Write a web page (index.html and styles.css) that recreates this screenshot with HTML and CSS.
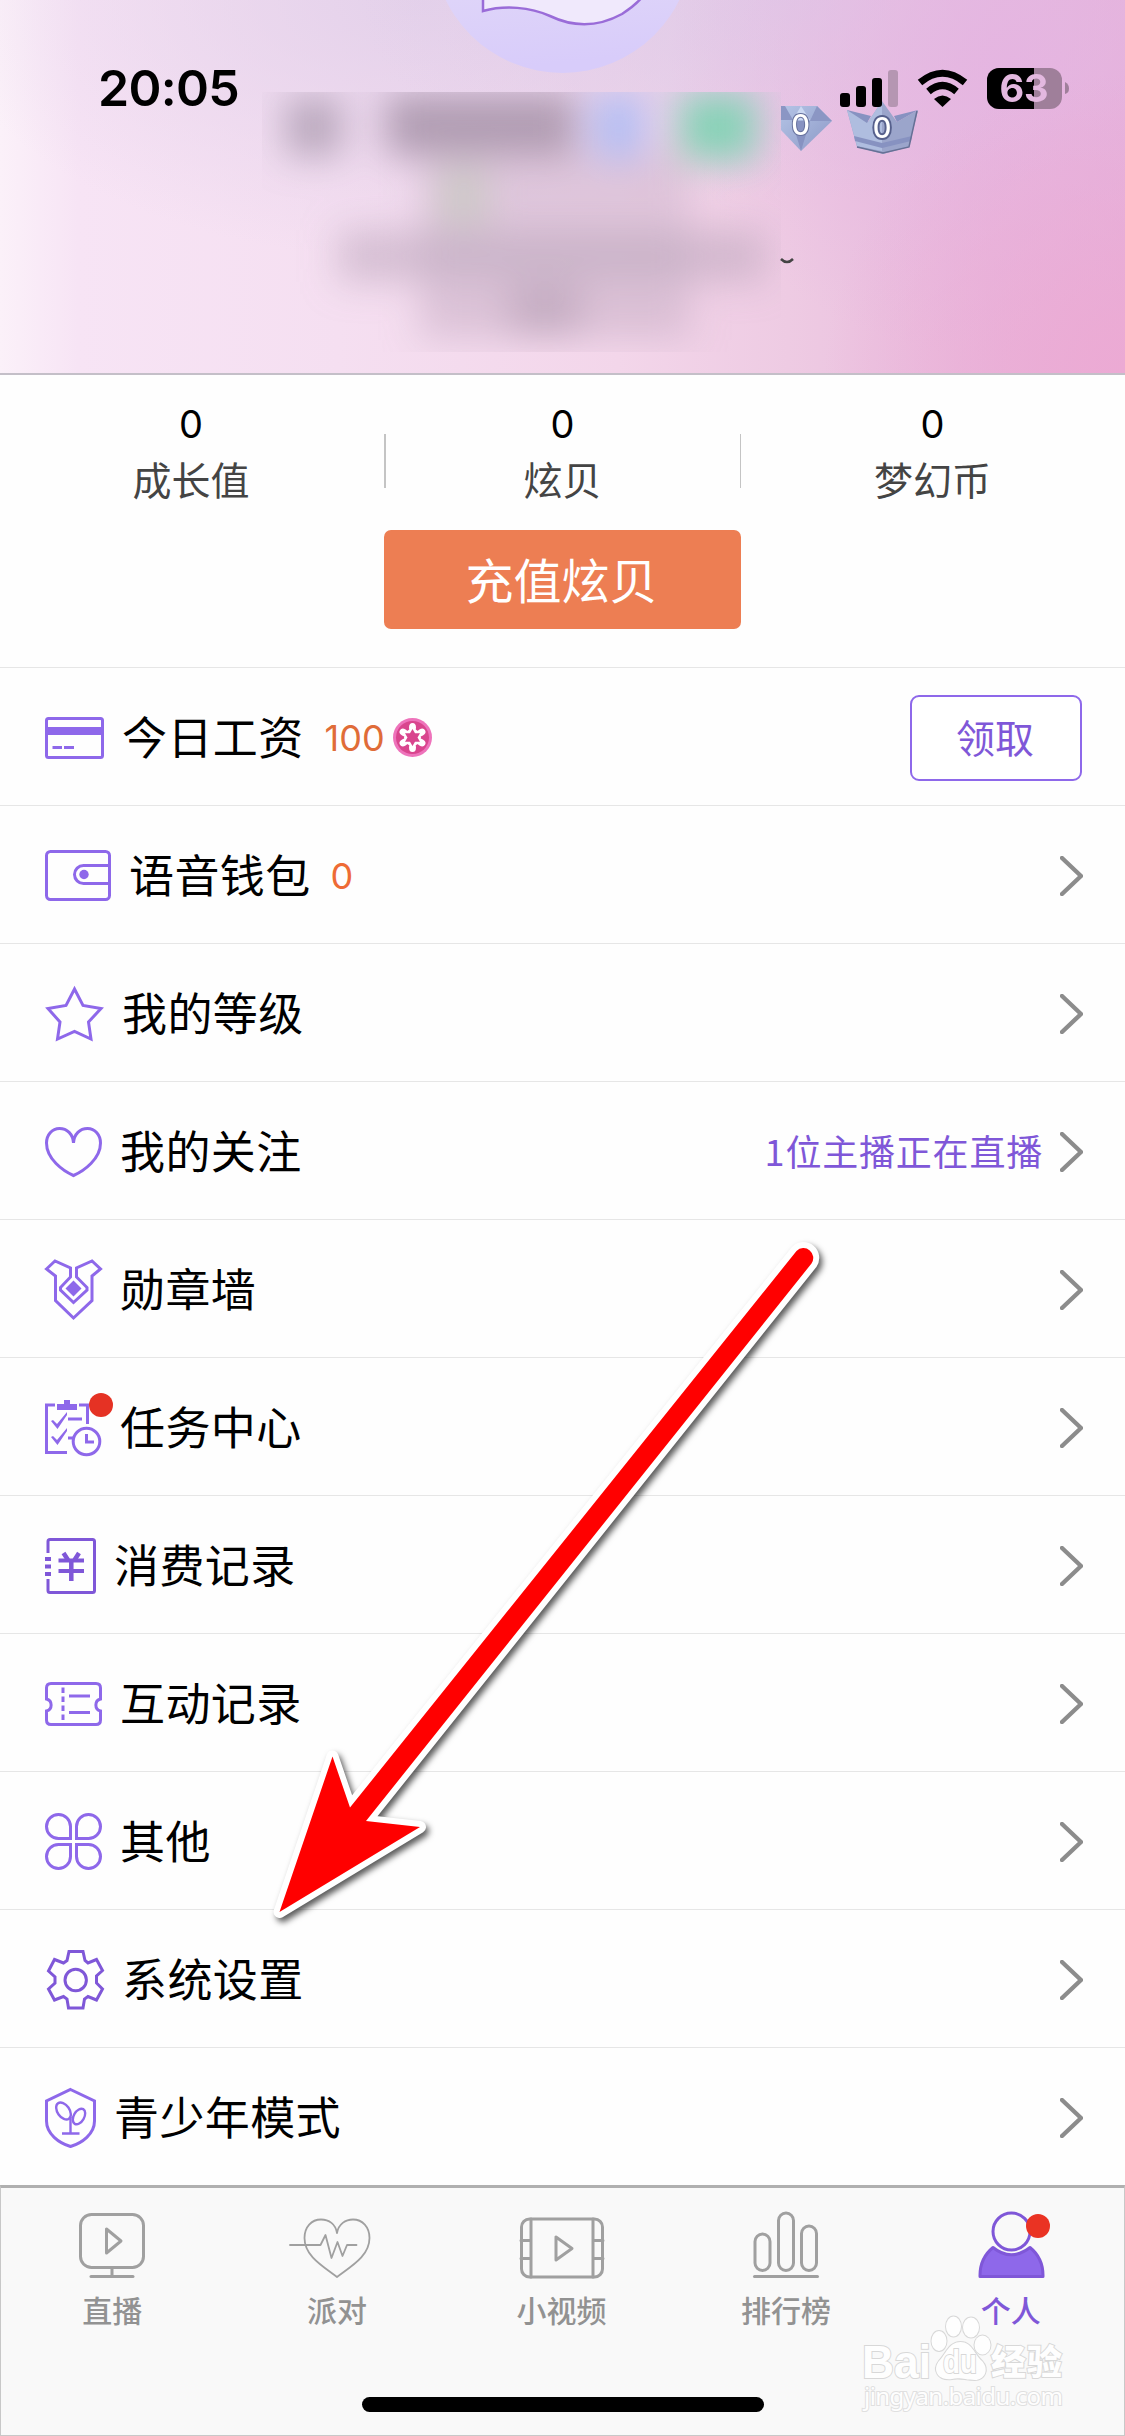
FILE: index.html
```html
<!DOCTYPE html>
<html lang="zh-CN">
<head>
<meta charset="utf-8">
<title>个人</title>
<link rel="stylesheet" href="styles.css">
</head>
<body>
<div class="screen">
  <header class="hero">
    <svg class="hero-art" viewBox="0 0 1125 373" width="1125" height="373">
      <defs>
        <linearGradient id="avatar" x1="0" y1="0" x2="0.1" y2="1"><stop offset="0.4" stop-color="#e5ddf8"/><stop offset="1" stop-color="#d8ccfa"/></linearGradient>
        <linearGradient id="gem" x1="0" y1="0" x2="1" y2="1"><stop offset="0" stop-color="#b4c4e6"/><stop offset="1" stop-color="#8c98c6"/></linearGradient>
        <filter id="soft" x="-50%" y="-50%" width="200%" height="200%"><feGaussianBlur stdDeviation="18"/></filter>
        <clipPath id="mask"><rect x="262" y="92" width="519" height="260"/></clipPath>
      </defs>
      <circle cx="562.5" cy="-57" r="130" fill="url(#avatar)"/>
      <path d="M483-2V11C505 5 530 7 550 16C575 28 600 26 622 14Q636 5 643-4Z" fill="#f0e9fc" stroke="#9a6cd8" stroke-width="2.5"/>
      <g clip-path="url(#mask)">
        <g filter="url(#soft)">
          <rect x="420" y="150" width="270" height="190" fill="#cdb6cb" opacity=".5"/>
          <rect x="286" y="98" width="56" height="58" fill="#a898ac" opacity=".75"/>
          <rect x="386" y="94" width="190" height="62" fill="#9d8ba0" opacity=".75"/>
          <rect x="594" y="94" width="50" height="64" fill="#aebcf5" opacity=".9"/>
          <rect x="680" y="94" width="76" height="66" fill="#75d3ae" opacity=".85"/>
          <rect x="438" y="168" width="50" height="56" fill="#c4cbbd" opacity=".65"/>
          <rect x="338" y="230" width="428" height="52" fill="#bba5bc" opacity=".55"/>
          <rect x="420" y="290" width="270" height="42" fill="#c3a9c0" opacity=".2"/>
          <rect x="510" y="286" width="70" height="48" fill="#b39bb2" opacity=".55"/>
        </g>
      </g>
      <path d="M781 106H817L832 121L801 151L781 130Z" fill="url(#gem)"/>
      <path d="M781 106H785L793 120H781Z M817 106L832 121H810Z" fill="#8b96c4"/>
      <path d="M793 120L801 106L810 120Z" fill="#cbd8f2"/><path d="M792 121H810L801 151Z" fill="#8792c1"/>
      <path d="M847 110L868 122L882 101L897 122L918 110L909 147L883 154L857 147Z" fill="#9ba5cb"/>
      <path d="M847 110L868 122L882 101V151L857 146Z" fill="#afbddf"/>
      <path d="M847 110L871 116L867 123Z M897 122L918 110L894 116Z" fill="#8792c1"/>
      <path d="M854 136L882 143L912 136L911 141L882 148L855 141Z" fill="#8792c1"/>
      <path d="M857 147L883 153L909 147L917 111" fill="none" stroke="#667095" stroke-width="1.5"/>
      <g class="gem-number"><text x="800.5" y="135">0</text><text class="outlined" x="882" y="138">0</text></g>
      <path d="M781 259q6 6 12 0" fill="none" stroke="#444" stroke-width="2.5"/>
    </svg>
    <div class="status">
      <span class="clock">20:05</span>
      <svg width="230" height="42" viewBox="840 68 230 42">
        <rect x="840" y="93" width="10" height="14" rx="3"/><rect x="856" y="86" width="10" height="21" rx="3"/><rect x="872" y="78" width="10" height="29" rx="3"/><rect x="888" y="70" width="10" height="37" rx="3" fill="#b596b2"/>
        <path d="M920 82.5Q942.500 64 965 82.500M928.500 91.500Q942.500 79.500 956.500 91.500" fill="none" stroke="#000" stroke-width="7"/>
        <path d="M934 99Q942.500 92 951 99L942.500 107Z"/>
        <rect x="987" y="68" width="75" height="41" rx="12" fill="#9f7f9a"/>
        <path d="M999 68H1034V109H999A12 12 0 0 1 987 97V80A12 12 0 0 1 999 68Z"/>
        <path d="M1065 82Q1069 84 1069 88.500Q1069 93 1065 94Z" fill="#9f7f9a"/>
        <text class="charge" x="1024" y="102">63</text>
      </svg>
    </div>
  </header>

  <section class="stats">
    <div class="stat"><b>0</b><span>成长值</span></div>
    <div class="stat ruled"><b>0</b><span>炫贝</span></div>
    <div class="stat"><b>0</b><span>梦幻币</span></div>
  </section>
  <div class="recharge-row"><button class="recharge">充值炫贝</button></div>

  <main class="menu">
    <div class="row">
      <svg class="ico" width="59" height="42"><rect x="1.500" y="1.500" width="56" height="39" rx="2"/><path class="solid" d="M1 10H58V18H1Z"/><path d="M7.500 30.500H17M19 30.500H29"/></svg>
      <span class="name">今日工资</span><span class="amount">100</span>
      <svg class="coin" width="39" height="39"><circle cx="19.500" cy="19.500" r="19.500" fill="#ee73bb"/><circle cx="19.500" cy="19.500" r="16.500" fill="#d9458e"/><g fill="#fff"><g id="petals"><ellipse cx="19.500" cy="9.500" rx="3.500" ry="4.500"/><ellipse cx="19.500" cy="29.500" rx="3.500" ry="4.500"/></g><use href="#petals" transform="rotate(60 19.500 19.500)"/><use href="#petals" transform="rotate(120 19.500 19.500)"/><circle cx="19.500" cy="19.500" r="8.500"/></g><path d="M19.500 11L22 15.200L27 15.200L24.500 19.500L27 23.800H22L19.500 28L17 23.800H12L14.500 19.500L12 15.200H17Z" fill="#d9458e"/></svg>
      <button class="claim">领取</button>
    </div>
    <div class="row">
      <svg class="ico" width="66" height="51"><rect x="1.500" y="1.500" width="63" height="48" rx="4"/><path d="M64 15.500H38.500A9 9 0 0 0 38.500 33.500H64"/><circle class="solid" cx="39" cy="24.500" r="4.700"/></svg>
      <span class="name">语音钱包</span><span class="amount zero">0</span>
      <svg class="chev" width="23" height="40"><path d="M2 2L21 20L2 38"/></svg>
    </div>
    <div class="row">
      <svg class="ico" width="59" height="56"><path d="M29.500 3L38 19.500L56 22.500L43.500 36L46 53L29.500 45.500L12.500 53L15 36L3 22.500L21 19.500Z"/></svg>
      <span class="name">我的等级</span>
      <svg class="chev" width="23" height="40"><path d="M2 2L21 20L2 38"/></svg>
    </div>
    <div class="row">
      <svg class="ico" width="57" height="50"><path d="M28.500 16C28 7 22 1.500 14.500 1.500C7 1.500 1.500 8 1.500 16C1.500 32 18 44 28.500 48.500C39 44 55.500 32 55.500 16C55.500 8 50 1.500 42.500 1.500C35 1.500 29 7 28.500 16Z"/></svg>
      <span class="name">我的关注</span><span class="note">1位主播正在直播</span>
      <svg class="chev" width="23" height="40"><path d="M2 2L21 20L2 38"/></svg>
    </div>
    <div class="row">
      <svg class="ico" width="57" height="61"><path d="M1.500 10L10 2L25.500 9V18L15.500 28.500V31L28.500 43.500L42 31V28.500L31.500 18V9L47 2L55.500 10L47 17V41.500L28.500 59L10.500 41.500V17Z"/><path class="solid" d="M28.500 21.500L36.500 29.500L28.500 37.500L20.500 29.500Z"/></svg>
      <span class="name">勋章墙</span>
      <svg class="chev" width="23" height="40"><path d="M2 2L21 20L2 38"/></svg>
    </div>
    <div class="row">
      <span class="dotted"><svg class="ico" width="57" height="56"><path d="M10 5H1.500V52.500H22M34 5H42.500V24M23 19H37M23 38H28"/><path class="solid" d="M12 4H19V0H25V4H32V10H12Z"/><path class="solid" d="M6 21L8 20L12 24L22 12V15L12.500 29ZM6 37L8 36L12 40L22 28V31L12.500 45Z"/><circle cx="41.500" cy="41.500" r="13.300"/><path d="M41.500 34V42H49"/></svg><i class="dot"></i></span>
      <span class="name">任务中心</span>
      <svg class="chev" width="23" height="40"><path d="M2 2L21 20L2 38"/></svg>
    </div>
    <div class="row">
      <svg class="ico deep" width="51" height="56"><path d="M3 15V3.500Q3 1.500 5 1.500H47.500Q49.500 1.500 49.500 3.500V52.500Q49.500 54.500 47.500 54.500H5Q3 54.500 3 52.500V41"/><path stroke-width="4" d="M0 21H6M0 28.500H6M0 36H6M13.500 22.500H39M13.500 33H39"/><path stroke-width="4.500" d="M26.300 22V43M18.500 15L23 22M34 15L29.500 22"/></svg>
      <span class="name">消费记录</span>
      <svg class="chev" width="23" height="40"><path d="M2 2L21 20L2 38"/></svg>
    </div>
    <div class="row">
      <svg class="ico" width="57" height="44"><path d="M1.500 17V6Q1.500 1.500 6 1.500H51Q55.500 1.500 55.500 6V17A6.200 6.200 0 0 0 55.500 29V38Q55.500 42.500 51 42.500H6Q1.500 42.500 1.500 38V29A6.200 6.200 0 0 0 1.500 17ZM24 14H45M24 30.500H45"/><path d="M18 5.500V39" stroke-dasharray="5.500 3.500"/></svg>
      <span class="name">互动记录</span>
      <svg class="chev" width="23" height="40"><path d="M2 2L21 20L2 38"/></svg>
    </div>
    <div class="row">
      <svg class="ico" width="57" height="57"><path d="M25.500 25.500H13.500A12 12 0 1 1 25.500 13.500ZM31.500 25.500V13.500A12 12 0 1 1 43.500 25.500ZM25.500 31.500V43.500A12 12 0 1 1 13.500 31.500ZM31.500 31.500H43.500A12 12 0 1 1 31.500 43.500Z"/></svg>
      <span class="name">其他</span>
      <svg class="chev" width="23" height="40"><path d="M2 2L21 20L2 38"/></svg>
    </div>
    <div class="row">
      <svg class="ico deep inset" width="57" height="60"><path d="M22 1.500H36L38 10.500L41 13L49.500 9.500L55.500 20.500L49.500 26V33L55.500 39L49.500 50L41 46.500L37.500 49L36 58H21.500L20 49L16.500 46.500L7.500 50L1.500 39L8 33V27L1.500 21L7.500 9.500L16.500 13L20 10.500Z"/><circle cx="28.700" cy="30" r="10.700"/></svg>
      <span class="name">系统设置</span>
      <svg class="chev" width="23" height="40"><path d="M2 2L21 20L2 38"/></svg>
    </div>
    <div class="row">
      <svg class="ico" width="51" height="60"><path d="M25.500 1.500L49.500 13V33C49.500 46 37 55 25.500 58.500C14 55 1.500 46 1.500 33V13Z"/><g stroke-width="2.400"><path d="M25.500 29V45M17 45.500H34.500"/><ellipse cx="18.500" cy="23" rx="6" ry="9.500" transform="rotate(-35 18.500 23)"/><ellipse cx="34" cy="28.500" rx="5.200" ry="8.500" transform="rotate(30 34 28.500)"/></g></svg>
      <span class="name">青少年模式</span>
      <svg class="chev" width="23" height="40"><path d="M2 2L21 20L2 38"/></svg>
    </div>
  </main>

  <nav class="tabs">
    <div class="tab"><svg width="90" height="72"><rect x="12.500" y="6.500" width="63" height="53" rx="11" /><path d="M38.500 21V45L53 33ZM44 60V68" /><path d="M23 68.500H65"/></svg><span>直播</span></div>
    <div class="tab"><svg class="thin" width="90" height="72"><path d="M44 25C42.500 16 36 11.500 28 11.500C18.500 11.500 11.500 19 11.500 30C11.500 48 29.500 58 44 69C58.500 58 76.500 48 76.500 30C76.500 19 69.500 11.500 60 11.500C52.500 11.500 45.500 16 44 25Z"/><path d="M-3 37H27.500L32.500 27L38.500 50L44.500 34L49.500 48L54 37H63.500"/></svg><span>派对</span></div>
    <div class="tab"><svg width="90" height="72"><rect x="4.500" y="11" width="81" height="58" rx="8"/><path d="M14 11V69M76 11V69M4 32.500H14M4 50.500H14M76 32.500H86M76 50.500H86M39 29V52L55 40.500Z"/></svg><span>小视频</span></div>
    <div class="tab"><svg width="90" height="72"><rect x="13" y="26" width="15" height="36.500" rx="7.500"/><rect x="36.500" y="5" width="15" height="57.500" rx="7.500"/><rect x="59.500" y="18" width="15" height="44.500" rx="7.500"/><path d="M12.500 68.500H75.500"/></svg><span>排行榜</span></div>
    <div class="tab active"><svg width="90" height="72"><circle cx="44.500" cy="23.500" r="18.500"/><path class="body" d="M26 39.500Q44 54 63 39.500Q76 50 76 67.500V68.500H13V67.500Q13 50 26 39.500Z"/><circle class="alert" cx="71" cy="18" r="12"/></svg><span>个人</span></div>
    <div class="home"></div>
    <svg class="watermark" width="220" height="110" viewBox="855 2310 220 110">
      <text class="brand" x="862" y="2378" textLength="69" lengthAdjust="spacingAndGlyphs">Bai</text>
      <ellipse cx="939" cy="2341" rx="7.500" ry="10"/><ellipse cx="953.500" cy="2326.500" rx="7.500" ry="10"/><ellipse cx="971" cy="2327.500" rx="8" ry="10"/><ellipse cx="982.500" cy="2345" rx="8" ry="9.500"/>
      <path d="M960.500 2342C972 2342 974 2354 982 2361C990 2370 984 2380 975 2380C965 2380 960 2377 952 2379C938 2381 932 2370 939 2361C946 2354 949 2342 960.500 2342Z"/>
      <text class="du" x="943" y="2373" textLength="34" lengthAdjust="spacingAndGlyphs">du</text>
      <text class="cn" x="991" y="2375" textLength="71">经验</text>
      <text class="url" x="864" y="2405" textLength="199">jingyan.baidu.com</text>
    </svg>
  </nav>

  <svg class="pointer" width="560" height="700" viewBox="265 1235 560 700">
    <path d="M279.500 1912L332.500 1756.500L350 1807.500L796.500 1251A9.800 9.800 0 0 1 811.500 1263.500L366 1821L420 1827Z"/>
  </svg>
</div>
</body>
</html>
```
FILE: styles.css
```css
* { box-sizing: border-box; }
body { margin: 0; background: #fefefe; font-family: "Noto Sans CJK SC", sans-serif; color: #000; }
button { font: inherit; margin: 0; padding: 0; }
.screen { position: relative; width: 1125px; height: 2436px; overflow: hidden; display: flex; flex-direction: column; }

.hero {
  position: relative; flex: none; height: 375px; border-bottom: 2px solid #c4bfc8;
  background:
    radial-gradient(ellipse 300px 300px at 1125px 373px, #ecaad4 0, rgba(236,170,212,0) 100%),
    radial-gradient(ellipse 340px 300px at 1010px 60px, rgba(229,180,225,.9) 0, rgba(229,180,225,0) 100%),
    radial-gradient(ellipse 420px 200px at 780px 0, rgba(222,202,232,.8) 0, rgba(222,202,232,0) 100%),
    radial-gradient(ellipse 480px 260px at 420px 0, rgba(226,208,234,.9) 0, rgba(226,208,234,0) 100%),
    linear-gradient(90deg, #fbf1f9 0, #f7e4f5 7%, #f5dff1 30%, #f3d6ea 55%, #eecbe3 70%, #e8b8dc 88%, #e6b0d8 100%);
}
.hero-art { position: absolute; inset: 0; }
.gem-number { font: 500 29px Inter, sans-serif; text-anchor: middle; fill: #fff; stroke: #66719d; stroke-width: 2px; paint-order: stroke; }
.gem-number .outlined { stroke: #56608c; stroke-width: 4px; }
.status { position: relative; display: flex; justify-content: space-between; align-items: center; padding: 62px 55px 0 98px; }
.clock { font: 600 50px/54px Inter, sans-serif; letter-spacing: -.7px; margin-top: -1px; }
.charge { font: 700 38px Inter, sans-serif; text-anchor: middle; fill: #e3b8df; }

.stats { display: grid; grid-template-columns: 382px 361px 379px; height: 155px; flex: none; }
.stat { display: flex; flex-direction: column; align-items: center; padding-top: 29px; }
.stat b { font: 400 38px/40px Inter, sans-serif; }
.stat span { font-size: 39px; line-height: 50px; margin-top: 9px; color: #444; }
.ruled { background: linear-gradient(#c4c4c4, #c4c4c4) 2px 59px / 2px 54px no-repeat, linear-gradient(#c4c4c4, #c4c4c4) 358px 59px / 1px 54px no-repeat; }
.recharge-row { display: flex; justify-content: center; flex: none; height: 137px; }
.recharge { width: 357px; height: 99px; border: 0; border-radius: 7px; background: #ed7e53; color: #fff; font-size: 48px; line-height: 92px; padding: 0 2px 4px 0; }

.menu { flex: none; }
.row { display: flex; align-items: center; height: 138px; border-top: 1px solid #e6e6e6; padding: 2px 42px 0 45px; }
.ico { flex: none; display: block; overflow: visible; fill: none; stroke: #8e68ea; stroke-width: 3; }
.deep { stroke: #7f57d8; }
.inset { margin-left: 2px; }
.ico .solid { fill: #8e68ea; stroke: none; }
.name { font-size: 45px; line-height: 60px; margin: -4px 0 0 18px; letter-spacing: .4px; }
.amount { font: 400 36px/60px Inter, sans-serif; color: #e06c38; margin-left: 21px; }
.zero { color: #ee6b35; margin-left: 20px; }
.coin { margin-left: 8px; }
.claim { margin-left: auto; width: 172px; height: 86px; border: 2px solid #8e68ea; border-radius: 9px; background: #fff; color: #7f57d8; font-size: 39px; line-height: 76px; padding: 0 2px 4px 0; margin-right: 1px; }
.chev { flex: none; margin-left: auto; fill: none; stroke: #8c8c8c; stroke-width: 4.4; stroke-linecap: round; stroke-linejoin: round; }
.note { margin: -3px 0 0 auto; font-size: 36px; letter-spacing: .8px; color: #7f57d8; line-height: 60px; }
.note + .chev { margin-left: 17px; }
.dotted { position: relative; }
.dot { position: absolute; left: 44px; top: -7px; width: 24px; height: 24px; border-radius: 50%; background: #e53224; }

.tabs { position: relative; flex: 1; display: grid; grid-template-columns: repeat(5, 1fr); align-content: start; border: 1px solid #c8c8c8; border-top: 3px solid #b0b0b0; background: #f9f9f9; }
.tab { display: flex; flex-direction: column; align-items: center; padding-top: 20px; font-size: 30px; font-weight: 500; color: #929292; }
.tab svg { overflow: visible; fill: none; stroke: #a0a0a0; stroke-width: 3; stroke-linejoin: round; stroke-linecap: round; }
.tab .thin { stroke-width: 1.8; }
.tab span { line-height: 40px; margin: 9px 2px 0 0; }
.active { color: #7f57d8; }
.active svg { stroke: #7f57d8; }
.tab .body { fill: #8e68ea; }
.tab .alert { fill: #ea3323; stroke: none; }
.home { position: absolute; left: 361px; top: 209px; width: 402px; height: 15px; border-radius: 8px; background: #000; }
.watermark { position: absolute; left: 854px; top: 122px; fill: #fefefe; stroke: #d8d8d8; stroke-width: 2; paint-order: stroke; }
.watermark .brand { font: 700 46px "Liberation Sans", sans-serif; }
.watermark .du { font: 700 33px "Liberation Sans", sans-serif; }
.watermark .cn { font: 900 35px "Noto Sans CJK SC", sans-serif; }
.watermark .url { font: 400 24px "Noto Sans", sans-serif; stroke: #e0e0e0; }

.pointer { position: absolute; left: 265px; top: 1235px; fill: #f00; stroke: #fff; stroke-width: 12; stroke-linejoin: round; paint-order: stroke; filter: drop-shadow(3px 4px 3px rgba(0,0,0,.65)); }
```
